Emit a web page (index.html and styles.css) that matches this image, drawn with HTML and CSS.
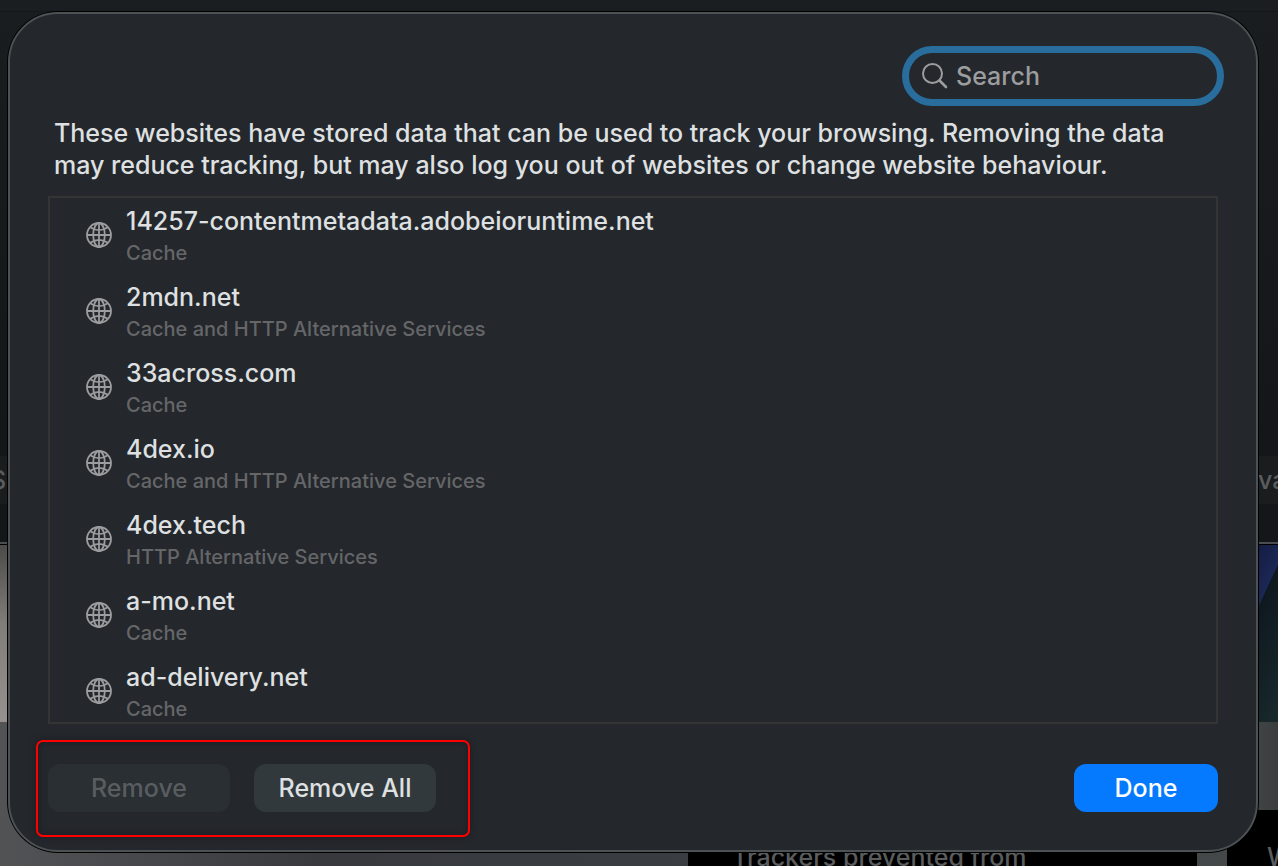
FILE: index.html
```html
<!DOCTYPE html>
<html lang="en-GB">
<head>
<meta charset="utf-8">
<title>Manage Website Data</title>
<link rel="stylesheet" href="styles.css">
</head>
<body>
<svg class="defs" aria-hidden="true">
  <symbol id="globe" viewBox="0 0 26 26">
    <g fill="none" stroke="currentColor" stroke-width="1.8">
      <circle cx="13" cy="13" r="12"/>
      <ellipse cx="13" cy="13" rx="5.8" ry="12"/>
      <path d="M13 1v24M1 13h24M4.200 5.200Q13 11 21.800 5.200M4.200 20.800Q13 15 21.800 20.800"/>
    </g>
  </symbol>
</svg>
<div class="window" aria-hidden="true">
  <div class="titlebar"></div>
  <div class="toolbar"><div class="tabs"><span>Se</span><span class="tab-end">vacy</span></div></div>
  <div class="hero"><div class="photo-start"></div><div class="photo-end"></div></div>
  <div class="report">
    <div class="card">Trackers prevented from</div>
    <div class="card card-tall">We</div>
  </div>
</div>
<main class="dialog" role="dialog" aria-label="Website data">
  <div class="search">
    <svg class="search-icon" viewBox="0 0 26 26" aria-hidden="true"><g fill="none" stroke="currentColor" stroke-linecap="round"><circle cx="10.500" cy="10.500" r="9.500" stroke-width="2"/><path d="M17.500 17.500l6.500 6.500" stroke-width="2.600"/></g></svg>
    <input class="search-input" type="text" placeholder="Search" aria-label="Search">
  </div>
  <p class="intro">These websites have stored data that can be used to track your browsing. Removing the data<br>may reduce tracking, but may also log you out of websites or change website behaviour.</p>
  <ul class="sites">
    <li class="site"><svg class="globe"><use href="#globe"/></svg><div><div class="name">14257-contentmetadata.adobeioruntime.net</div><div class="kind">Cache</div></div></li>
    <li class="site"><svg class="globe"><use href="#globe"/></svg><div><div class="name">2mdn.net</div><div class="kind">Cache and HTTP Alternative Services</div></div></li>
    <li class="site"><svg class="globe"><use href="#globe"/></svg><div><div class="name">33across.com</div><div class="kind">Cache</div></div></li>
    <li class="site"><svg class="globe"><use href="#globe"/></svg><div><div class="name">4dex.io</div><div class="kind">Cache and HTTP Alternative Services</div></div></li>
    <li class="site"><svg class="globe"><use href="#globe"/></svg><div><div class="name">4dex.tech</div><div class="kind">HTTP Alternative Services</div></div></li>
    <li class="site"><svg class="globe"><use href="#globe"/></svg><div><div class="name">a-mo.net</div><div class="kind">Cache</div></div></li>
    <li class="site"><svg class="globe"><use href="#globe"/></svg><div><div class="name">ad-delivery.net</div><div class="kind">Cache</div></div></li>
  </ul>
  <footer class="actions">
    <div class="removal">
      <button class="button" type="button" disabled>Remove</button>
      <button class="button" type="button">Remove All</button>
      <div class="callout"></div>
    </div>
    <button class="button primary" type="button">Done</button>
  </footer>
</main>
</body>
</html>
```
FILE: styles.css
```css
* { box-sizing: border-box; }
body {
  margin: 0;
  height: 100vh;
  overflow: hidden;
  position: relative;
  background: #16191b;
  color: #dfe0e1;
  font: 500 25px/32px Inter, "Liberation Sans", sans-serif;
}
.defs { position: absolute; width: 0; height: 0; }

/* dimmed window behind the sheet */
.window { height: 100%; display: flex; flex-direction: column; color: #5a5c5d; }
.titlebar { height: 12px; background: #1a1e21; border-bottom: 1px solid #14181a; }
.toolbar {
  height: 533px;
  display: flex;
  flex-direction: column;
  justify-content: flex-end;
  padding-bottom: 40px;
  background: linear-gradient(#1a1d20, #141719 80%);
  border-bottom: 1px solid #000;
  box-shadow: inset 0 -2px #4b4e4f;
}
.tabs {
  height: 48px;
  display: flex;
  justify-content: space-between;
  align-items: center;
  background: #1a1d1e;
}
.tabs span { width: 20px; margin-left: -10px; white-space: nowrap; }
.hero { height: 177px; display: flex; justify-content: space-between; }
.photo-start { width: 40px; background: linear-gradient(#4d4b49, #817d79 45%, #96918e); }
.photo-end { width: 40px; background: linear-gradient(115deg, #141d44 0 20px, #1b2754 44px, #0e191f 45px, #18292c); }
.report {
  flex: 1;
  display: flex;
  justify-content: flex-end;
  align-items: flex-end;
  gap: 30px;
  background: linear-gradient(90deg, #525355, #37393d 25%, #393d42 52%, #454849 97%, #3b3e3f);
}
.card { width: 509px; height: 56px; padding: 31px 44px 0; background: #000; white-space: nowrap; overflow: hidden; line-height: 32px; }
.card-tall { width: 51px; padding: 31px 0 0 40px; }

/* sheet */
.dialog {
  position: absolute;
  inset: 12px 20px 14px 8px;
  display: flex;
  flex-direction: column;
  padding: 32px 38px 38px;
  background: #24272c;
  border: 2px solid #4c5253;
  border-radius: 50px;
  box-shadow: 0 0 0 1px #000;
}
.search {
  align-self: flex-end;
  width: 322px;
  height: 60px;
  margin-right: -6px;
  display: flex;
  align-items: center;
  gap: 8px;
  padding: 0 13px;
  border: 7px solid #286d9b;
  border-radius: 30px;
  color: #9b9d9f;
}
.search-icon { width: 26px; height: 26px; flex: none; }
.search-input {
  flex: 1;
  min-width: 0;
  padding: 0;
  border: 0;
  outline: 0;
  background: none;
  color: inherit;
  font: inherit;
}
.search-input::placeholder { color: inherit; opacity: 1; }
.intro { margin: 11px 0 15px; padding-left: 6px; white-space: nowrap; }
.sites {
  flex: 1;
  min-height: 0;
  margin: 0 0 40px;
  padding: 0;
  list-style: none;
  overflow: hidden;
  border: 2px solid #343434;
}
.site { height: 76px; display: flex; gap: 14px; padding: 7px 0 0 36px; }
.globe { width: 26px; height: 26px; margin-top: 17px; flex: none; color: #9b9d9f; }
.kind { font-size: 20px; color: #646668; }
.actions { display: flex; justify-content: space-between; }
.removal { position: relative; display: flex; gap: 24px; }
.button {
  width: 182px;
  height: 48px;
  padding: 0;
  border: 0;
  border-radius: 12px;
  background: #31393c;
  color: #dfe0e1;
  font: inherit;
}
.button:disabled { background: #2a2f33; color: #595d60; }
.primary { width: 144px; background: #057aff; color: #fff; }
.callout {
  position: absolute;
  inset: -24px -34px -25px -12px;
  border: 2px solid #f00;
  border-radius: 7px;
  box-shadow: 0 0 6px #1a1c20, inset 0 0 6px #1a1c20;
  pointer-events: none;
}
```
